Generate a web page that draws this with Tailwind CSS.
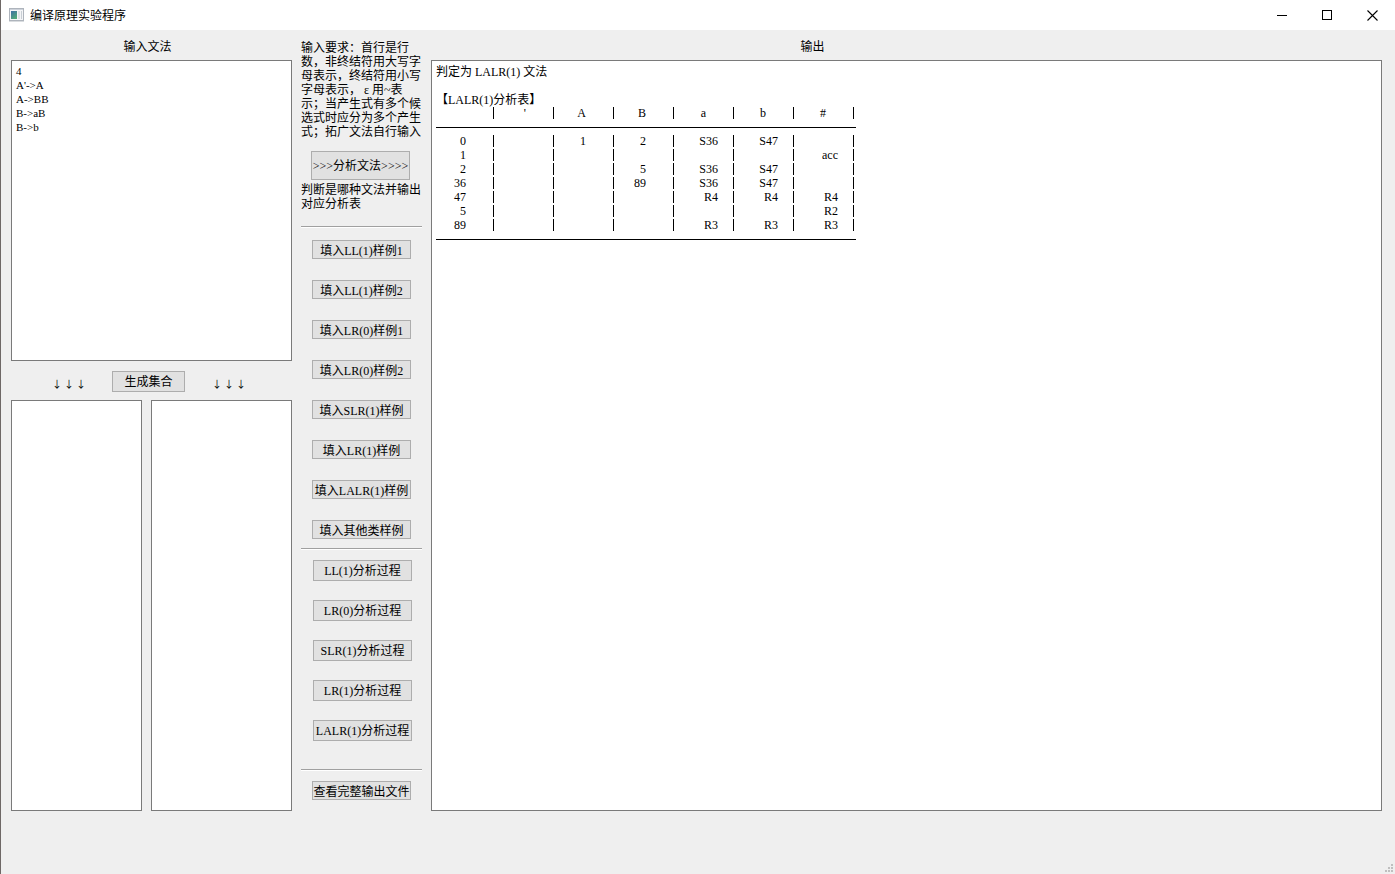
<!DOCTYPE html>
<html lang="zh-CN">
<head>
<meta charset="utf-8">
<title>编译原理实验程序</title>
<script src="https://cdn.jsdelivr.net/npm/@tailwindcss/browser@4"></script>
</head>
<body class="flex min-h-screen flex-col border-l border-[#6e6866] bg-[#efefef] font-['Liberation_Serif','Noto_Sans_CJK_SC',sans-serif] text-[12px] leading-[14px] text-black">

<header class="flex h-[30px] shrink-0 items-center bg-white pl-2">
  <svg class="h-[14px] w-4" viewBox="0 0 16 14" aria-hidden="true">
    <defs><linearGradient id="g" x1="0" y1="0" x2="0.6" y2="1"><stop offset="0" stop-color="#3d6fa5"/><stop offset="1" stop-color="#4fa878"/></linearGradient></defs>
    <rect x="0.5" y="0.5" width="14" height="12" fill="#f4f5f7" stroke="#aeb4bc"/>
    <rect x="1" y="1" width="13" height="1" fill="#cdd2da"/>
    <rect x="2" y="3" width="6" height="8" fill="url(#g)"/>
    <rect x="9" y="3" width="2" height="8" fill="#dde1e4"/>
    <rect x="12" y="3" width="1" height="8" fill="#c8ced4"/>
    <rect x="0" y="13" width="15" height="1" fill="#d9dcdf"/>
  </svg>
  <h1 class="ml-[5px] flex-1 font-['Noto_Sans_CJK_SC',sans-serif]">编译原理实验程序</h1>
  <button type="button" aria-label="最小化" class="flex h-[29px] w-[45px] items-center justify-center"><svg class="size-[11px]" viewBox="0 0 11 11"><path d="M0 5.5H10" stroke="#000"/></svg></button>
  <button type="button" aria-label="最大化" class="flex h-[29px] w-[45px] items-center justify-center"><svg class="size-[11px]" viewBox="0 0 11 11"><rect x="0.5" y="0.5" width="9" height="9" fill="none" stroke="#000"/></svg></button>
  <button type="button" aria-label="关闭" class="flex h-[29px] w-[45px] items-center justify-center"><svg class="size-[11px]" viewBox="0 0 11 11"><path d="M0.5 0.5L10.5 10.5M10.5 0.5L0.5 10.5" stroke="#000" stroke-width="1.1"/></svg></button>
</header>

<main class="flex flex-1 gap-[9px] pr-[13px] pb-[63px] pl-[10px]">

  <section class="flex w-[281px] shrink-0 flex-col">
    <label for="grammar" class="flex h-[30px] items-center justify-center pt-1 pr-2">输入文法</label>
    <textarea id="grammar" spellcheck="false" class="h-[301px] resize-none border border-[#7a7a7a] bg-white px-1 py-[3px] text-[11px] leading-[14px] outline-none">4
A'-&gt;A
A-&gt;BB
B-&gt;aB
B-&gt;b</textarea>
    <div class="flex h-[39px] items-center pt-[2px] pl-10">
      <label for="set1" class="flex w-9 gap-[2px] pt-1 pl-px font-['Noto_Sans_CJK_SC',sans-serif] text-[10px]"><span>↓</span><span>↓</span><span>↓</span></label>
      <button type="button" class="ml-[25px] h-[21px] w-[73px] border border-[#adadad] bg-[#e1e1e1] pt-px">生成集合</button>
      <label for="set2" class="ml-[26px] flex w-9 gap-[2px] pt-1 pl-px font-['Noto_Sans_CJK_SC',sans-serif] text-[10px]"><span>↓</span><span>↓</span><span>↓</span></label>
    </div>
    <div class="flex flex-1 gap-[9px]">
      <textarea id="set1" class="w-[131px] resize-none border border-[#7a7a7a] bg-white px-1 py-[3px] outline-none"></textarea>
      <textarea id="set2" class="w-[141px] resize-none border border-[#7a7a7a] bg-white px-1 py-[3px] outline-none"></textarea>
    </div>
  </section>

  <section class="flex w-[121px] shrink-0 flex-col whitespace-nowrap pt-[11px]">
    <p>输入要求：首行是行<br>数，非终结符用大写字<br>母表示，终结符用小写<br>字母表示，<span class="px-[3px]">ε</span>用~表<br>示；当产生式有多个候<br>选式时应分为多个产生<br>式；拓广文法自行输入</p>
    <button type="button" class="mt-3 ml-[10px] h-[29px] w-[99px] border border-[#adadad] bg-[#e1e1e1] pt-px">&gt;&gt;&gt;分析文法&gt;&gt;&gt;&gt;</button>
    <p class="mt-[3px]">判断是哪种文法并输出<br>对应分析表</p>
    <hr class="mt-[15px] h-[2px] border-t border-b border-t-[#a0a0a0] border-b-white">

    <div class="mt-3 ml-[11px] flex flex-col gap-[21px] [&>button]:h-[19px] [&>button]:w-[99px] [&>button]:border [&>button]:border-[#adadad] [&>button]:bg-[#e1e1e1] [&>button]:pt-[2px]">
      <button type="button">填入LL(1)样例1</button>
      <button type="button">填入LL(1)样例2</button>
      <button type="button">填入LR(0)样例1</button>
      <button type="button">填入LR(0)样例2</button>
      <button type="button">填入SLR(1)样例</button>
      <button type="button">填入LR(1)样例</button>
      <button type="button">填入LALR(1)样例</button>
      <button type="button">填入其他类样例</button>
    </div>
    <hr class="mt-[9px] h-[2px] border-t border-b border-t-[#a0a0a0] border-b-white">

    <div class="mt-[10px] ml-3 flex flex-col gap-[19px] [&>button]:h-[21px] [&>button]:w-[99px] [&>button]:border [&>button]:border-[#adadad] [&>button]:bg-[#e1e1e1] [&>button]:pt-px">
      <button type="button">LL(1)分析过程</button>
      <button type="button">LR(0)分析过程</button>
      <button type="button">SLR(1)分析过程</button>
      <button type="button">LR(1)分析过程</button>
      <button type="button">LALR(1)分析过程</button>
    </div>
    <hr class="mt-7 h-[2px] border-t border-b border-t-[#a0a0a0] border-b-white">
    <button type="button" class="mt-[10px] ml-[11px] h-[19px] w-[99px] border border-[#adadad] bg-[#e1e1e1] pt-[2px]">查看完整输出文件</button>
  </section>

  <section class="flex min-w-0 flex-1 flex-col" aria-labelledby="out">
    <h2 id="out" class="flex h-[30px] items-center justify-center pt-1 pr-[188px]">输出</h2>
    <div class="flex-1 border border-[#7a7a7a] bg-white px-1 py-[3px]">
      <div class="h-[42px] pt-px">
        <p>判定为 LALR(1) 文法</p>
        <p class="mt-[14px]">【LALR(1)分析表】</p>
      </div>
      <table class="w-[420px] table-fixed border-collapse text-right [&_td]:h-[14px] [&_td]:p-0 [&_td]:whitespace-nowrap [&_td]:after:mt-px [&_td]:after:ml-[27px] [&_td]:after:inline-block [&_td]:after:h-3 [&_td]:after:w-px [&_td]:after:bg-black [&_td]:after:align-top [&_td]:after:content-[''] [&_td[data-action]]:after:ml-[15px]">
        <colgroup><col class="w-[58px]"><col class="w-[60px]"><col class="w-[60px]"><col class="w-[60px]"><col class="w-[60px]"><col class="w-[60px]"><col class="w-[60px]"><col class="w-[2px]"></colgroup>
        <thead>
          <tr><td></td><td>'</td><td>A</td><td>B</td><td>a</td><td>b</td><td>#</td></tr>
          <tr><th colspan="8" class="h-[14px] p-0"><div class="h-px bg-black"></div></th></tr>
        </thead>
        <tbody>
          <tr><td>0</td><td></td><td>1</td><td>2</td><td data-action>S36</td><td data-action>S47</td><td></td></tr>
          <tr><td>1</td><td></td><td></td><td></td><td></td><td></td><td data-action>acc</td></tr>
          <tr><td>2</td><td></td><td></td><td>5</td><td data-action>S36</td><td data-action>S47</td><td></td></tr>
          <tr><td>36</td><td></td><td></td><td>89</td><td data-action>S36</td><td data-action>S47</td><td></td></tr>
          <tr><td>47</td><td></td><td></td><td></td><td data-action>R4</td><td data-action>R4</td><td data-action>R4</td></tr>
          <tr><td>5</td><td></td><td></td><td></td><td></td><td></td><td data-action>R2</td></tr>
          <tr><td>89</td><td></td><td></td><td></td><td data-action>R3</td><td data-action>R3</td><td data-action>R3</td></tr>
        </tbody>
        <tfoot>
          <tr><th colspan="8" class="h-[14px] p-0"><div class="h-px bg-black"></div></th></tr>
        </tfoot>
      </table>
    </div>
  </section>
</main>

<svg class="absolute right-[2px] bottom-[2px] size-2" viewBox="0 0 8 8" fill="#bfbfbf" aria-hidden="true"><path d="M6 0h2v2H6zM3 3h2v2H3zM6 3h2v2H6zM0 6h2v2H0zM3 6h2v2H3zM6 6h2v2H6z"/></svg>
</body>
</html>
